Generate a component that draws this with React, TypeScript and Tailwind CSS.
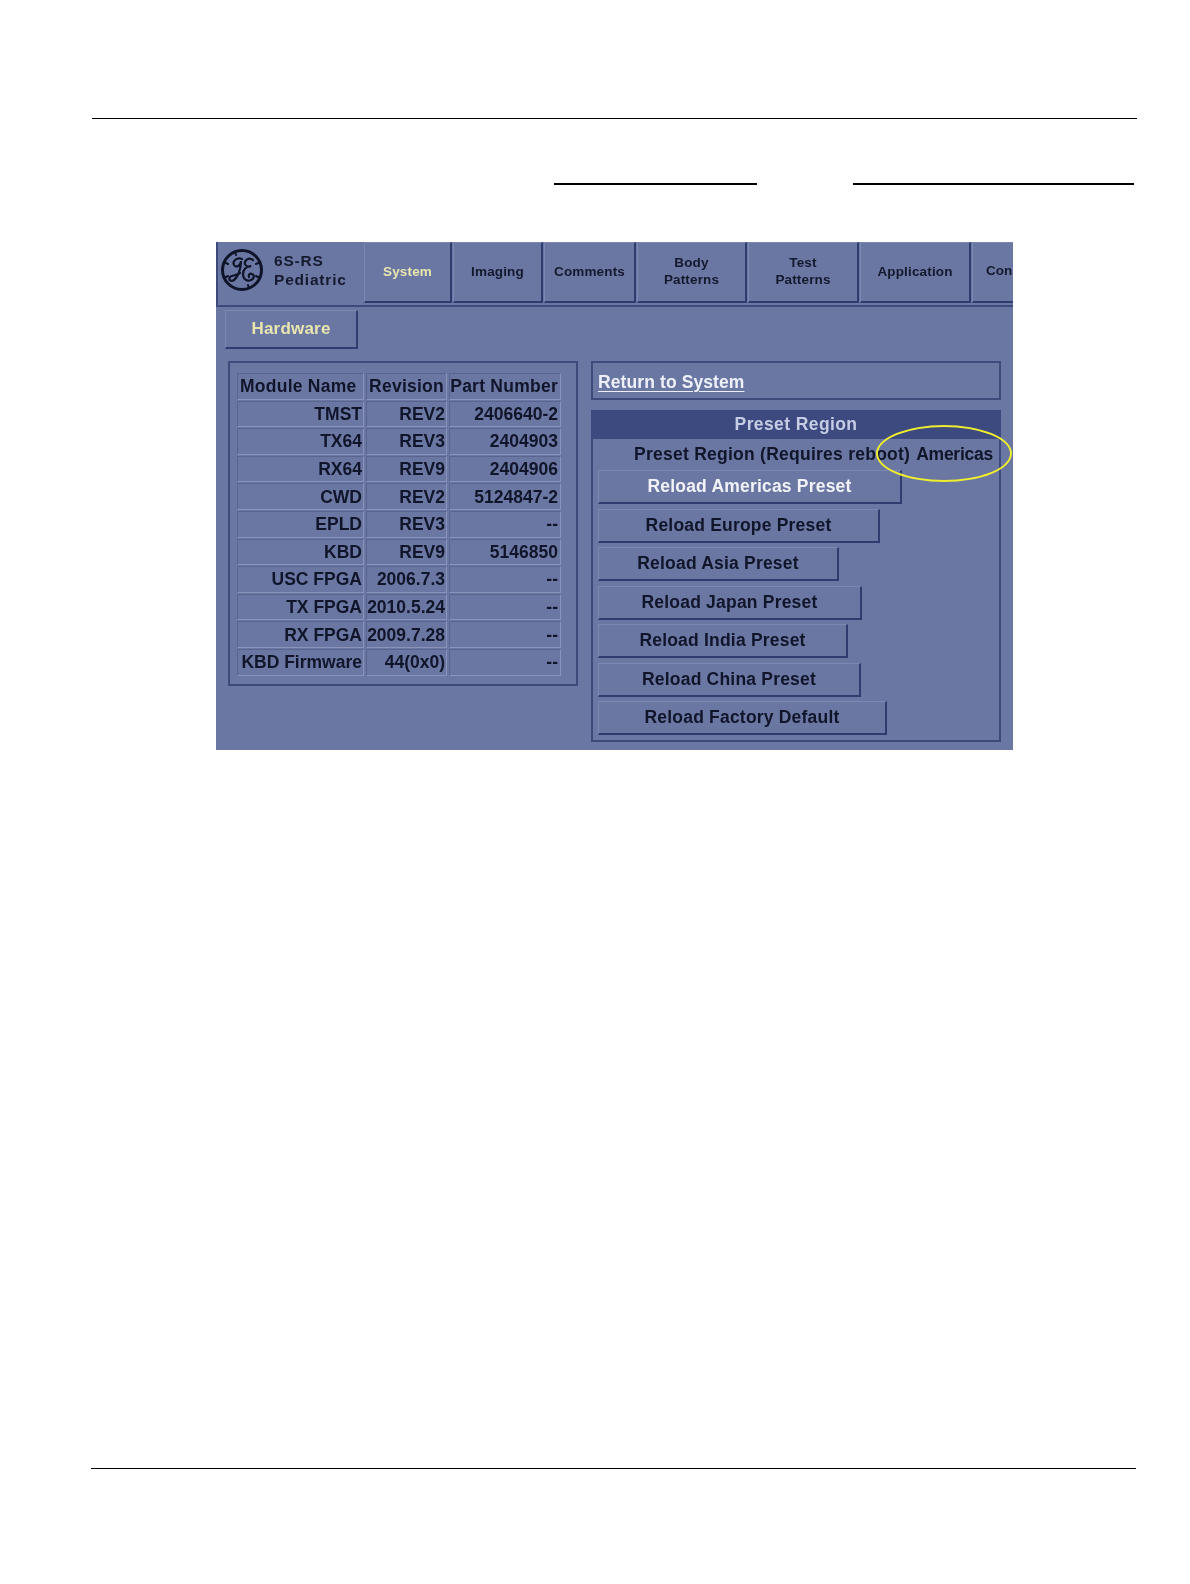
const tabs = [
  { label: ["System"], w: "w-[88px]", active: true },
  { label: ["Imaging"], w: "w-[90px]" },
  { label: ["Comments"], w: "w-[92px]" },
  { label: ["Body", "Patterns"], w: "w-[110px]" },
  { label: ["Test", "Patterns"], w: "w-[111px]" },
  { label: ["Application"], w: "w-[111px]" },
];

const rows = [
  ["TMST", "REV2", "2406640-2"],
  ["TX64", "REV3", "2404903"],
  ["RX64", "REV9", "2404906"],
  ["CWD", "REV2", "5124847-2"],
  ["EPLD", "REV3", "--"],
  ["KBD", "REV9", "5146850"],
  ["USC FPGA", "2006.7.3", "--"],
  ["TX FPGA", "2010.5.24", "--"],
  ["RX FPGA", "2009.7.28", "--"],
  ["KBD Firmware", "44(0x0)", "--"],
];

const presets = [
  { label: "Reload Americas Preset", w: "w-[304px]", active: true },
  { label: "Reload Europe Preset", w: "w-[282px]" },
  { label: "Reload Asia Preset", w: "w-[241px]" },
  { label: "Reload Japan Preset", w: "w-[264px]" },
  { label: "Reload India Preset", w: "w-[250px]" },
  { label: "Reload China Preset", w: "w-[263px]" },
  { label: "Reload Factory Default", w: "w-[289px]" },
];

const raised =
  "border-t border-l border-t-[#7d88b2] border-l-[#7d88b2] border-r-2 border-b-2 border-r-[#2f3c70] border-b-[#2f3c70]";

const cell =
  "flex h-[26.6px] items-center justify-end whitespace-nowrap border border-[#59648f] border-b-[#8a94bb] border-r-[#8a94bb]";

const GeLogo = () => (
  <svg viewBox="0 0 44 44" className="h-[44px] w-[44px] shrink-0" fill="none" stroke="#0f1428" strokeLinecap="round">
    <circle cx="22" cy="22" r="19.5" strokeWidth="3" />
    <path d="M4 14 L8 16 M4 30 L8 28 M40 14 L36 16 M40 30 L36 28 M15 4 L16 7 M29 40 L28 37" strokeWidth="2" />
    <path
      d="M22 11 C17 9 12 13 14 17 C16 20 21 18 21 13 C21 21 18 29 14 32 C11 34 8 32 10 29 C12 27 16 28 20 25"
      strokeWidth="2.2"
    />
    <path
      d="M33 12 C29 9 24 12 25 16 C26 19 29 19 31 18 C26 18 23 22 23 26 C23 31 27 34 31 32 C34 31 35 27 32 26 C30 25 28 27 29 29"
      strokeWidth="2.2"
    />
  </svg>
);

const App = () => {
  return (
    <div className="h-[1584px] w-[1190px] overflow-hidden bg-white font-['Liberation_Sans',Arial,sans-serif]">
      <div className="ml-[92px] mt-[118px] h-px w-[1045px] bg-black" />

      <div className="mt-[64px] flex h-[2px]">
        <div className="ml-[554px] w-[203px] bg-black" />
        <div className="ml-[96px] w-[281px] bg-black" />
      </div>

      <div className="relative ml-[216px] mt-[57px] h-[508px] w-[797px] overflow-hidden bg-[#6b77a3] blur-[0.35px]">
        {/* top tab bar */}
        <div className="flex h-[65px] border-b-2 border-l-2 border-[#3d4a7c]">
          <div className="flex w-[146px] shrink-0 items-center pb-[8px] pl-[2px]">
            <GeLogo />
            <div className="ml-[10px] text-[15.5px] font-bold leading-[19px] tracking-[0.8px] text-[#15192e]">
              <div>6S-RS</div>
              <div>Pediatric</div>
            </div>
          </div>
          <div className="flex gap-[1px]">
            {tabs.map((t) => (
              <div
                key={t.label[0]}
                className={`${t.w} ${raised} flex h-[61px] shrink-0 flex-col items-center justify-center pb-[2px] text-[13.5px] font-bold leading-[17px] tracking-[0.15px] ${
                  t.active ? "text-[#e8e6ae]" : "text-[#15192e]"
                }`}
              >
                {t.label.map((l) => (
                  <div key={l}>{l}</div>
                ))}
              </div>
            ))}
            <div className={`${raised} flex h-[61px] w-[60px] shrink-0 items-center pb-[2px] pl-[13px] text-[13.5px] font-bold text-[#15192e]`}>
              Con
            </div>
          </div>
        </div>

        {/* sub tab */}
        <div
          className={`${raised} ml-[9px] mt-[3px] flex h-[39px] w-[133px] items-center justify-center text-[17px] font-bold tracking-[0.2px] text-[#e8e6ae]`}
        >
          Hardware
        </div>

        <div className="ml-[12px] mt-[12px] flex items-start gap-[13px]">
          {/* module table */}
          <div className="h-[325px] w-[350px] border-2 border-[#3d4a7c] pl-[7px] pt-[10px]">
            <div className="mb-[1px] flex gap-[2px] text-[17.5px] font-bold leading-[24px] tracking-[0.25px] text-[#11152a]">
              <div className={`${cell} w-[127px] !justify-start pl-[2px]`}>Module Name</div>
              <div className={`${cell} w-[81px] pr-[2px]`}>Revision</div>
              <div className={`${cell} w-[112px] pr-[2px]`}>Part Number</div>
            </div>
            {rows.map((r) => (
              <div key={r[0]} className="mb-[1px] flex gap-[2px] text-[17.5px] font-bold leading-[24px] text-[#11152a]">
                <div className={`${cell} w-[127px] pr-[1px]`}>{r[0]}</div>
                <div className={`${cell} w-[81px] pr-[1px]`}>{r[1]}</div>
                <div className={`${cell} w-[112px] pr-[2px]`}>{r[2]}</div>
              </div>
            ))}
          </div>

          {/* right column */}
          <div className="w-[410px]">
            <div className="flex h-[39px] items-center border-2 border-[#3d4a7c] pl-[5px] pt-[3px] text-[17.5px] font-bold tracking-[0.1px] text-[#eef0f8] underline underline-offset-[3px]">
              Return to System
            </div>
            <div className="mt-[10px] h-[332px] border-2 border-t-0 border-[#3d4a7c]">
              <div className="-mx-[2px] flex h-[29px] items-center justify-center bg-[#3c4a80] text-[17.5px] font-bold tracking-[0.4px] text-[#c6cce4]">
                Preset Region
              </div>
              <div className="flex h-[31px] items-center justify-end pr-[6px] text-[17.5px] font-bold tracking-[0.25px] text-[#11152a]">
                Preset Region (Requires reboot)
                <span className="ml-[6px] tracking-[-0.25px]">Americas</span>
              </div>
              <div className="flex flex-col gap-[4.5px] pl-[5px]">
                {presets.map((p) => (
                  <div
                    key={p.label}
                    className={`${p.w} ${raised} flex h-[34px] items-center justify-center text-[17.5px] font-bold tracking-[0.2px] ${
                      p.active ? "text-[#f2f3f8]" : "text-[#11152a]"
                    }`}
                  >
                    {p.label}
                  </div>
                ))}
              </div>
            </div>
          </div>
        </div>

        {/* yellow callout ring */}
        <div className="absolute left-[660px] top-[183px] h-[57px] w-[136px] rounded-[50%] border-2 border-[#efee2e]" />
      </div>

      <div className="ml-[91px] mt-[718px] h-px w-[1045px] bg-black" />
    </div>
  );
};

export default App;
